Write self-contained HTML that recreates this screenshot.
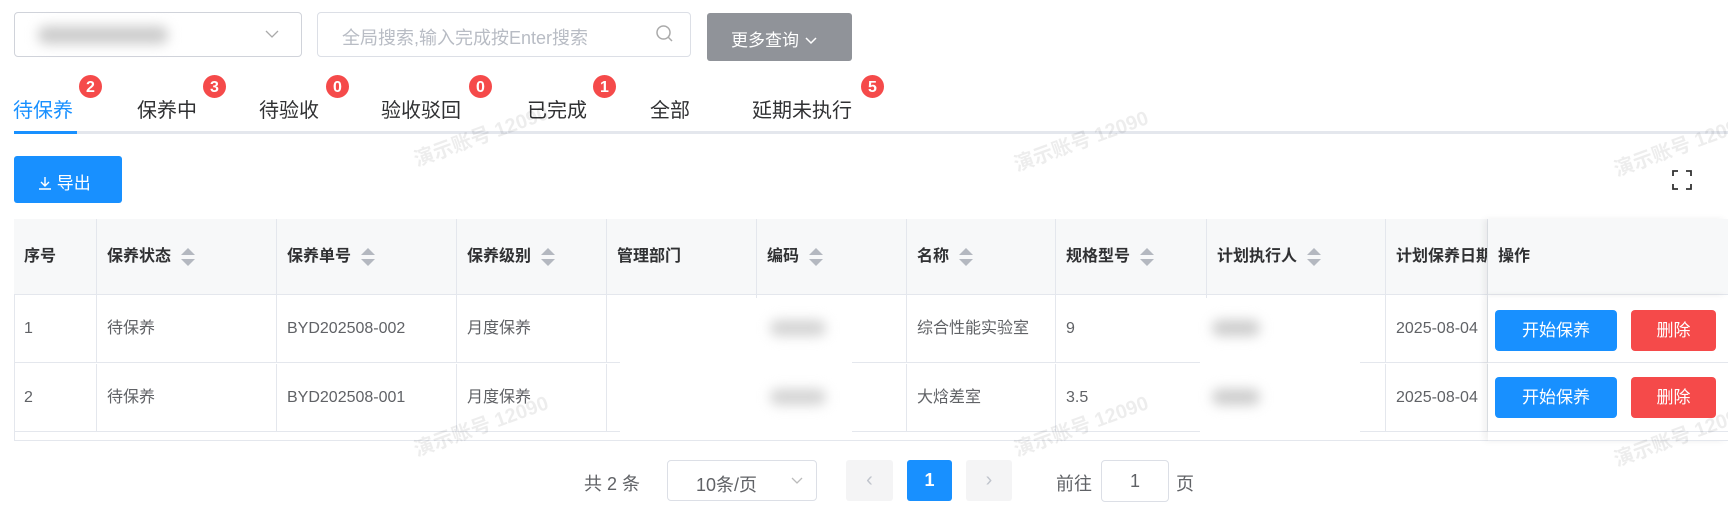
<!DOCTYPE html><html><head><meta charset="utf-8"><style>
*{box-sizing:border-box;margin:0;padding:0}
body{width:1728px;height:507px;overflow:hidden;background:#fff;font-family:"Liberation Sans","Noto Sans CJK SC",sans-serif;color:#303133;position:relative}
.a{position:absolute}
.blur{background:#bbb;filter:blur(6px);border-radius:8px}
.badge{position:absolute;width:25px;height:25px;border-radius:13px;background:#f54a4a;color:#fff;font-size:16px;font-weight:bold;text-align:center;line-height:25px;border:1px solid #fff}
.tab{position:absolute;top:94px;font-size:20px;color:#303133}
.th,.td{position:absolute;font-size:16px;display:flex;align-items:center;padding-left:10px;border-right:1px solid #e4e7ed;border-bottom:1px solid #e4e7ed;line-height:20px}
.th{font-weight:bold;background:#f7f8f9;color:#303133;height:76px;top:219px}
.td{color:#606266;height:68px}
.sort{display:inline-block;margin-left:10px;width:12px;height:18px;position:relative}
.sort:before,.sort:after{content:"";position:absolute;left:0;border-left:7px solid transparent;border-right:7px solid transparent}
.sort:before{top:0;border-bottom:7px solid #b4b8c0}
.sort:after{bottom:0;border-top:7px solid #b4b8c0}
.btn{position:absolute;color:#fff;font-size:17px;text-align:center;border-radius:4px}
.wm{position:absolute;color:rgba(0,0,0,0.07);font-size:20px;font-weight:bold;transform:rotate(-20deg);white-space:nowrap}
</style></head><body>
<div class="a" style="left:14px;top:12px;width:288px;height:45px;border:1px solid #d0d3da;border-radius:4px"></div>
<div class="a blur" style="left:38px;top:26px;width:130px;height:18px;background:#ccc"></div>
<svg class="a" style="left:264px;top:28px" width="16" height="12"><path d="M2 3l6 6 6-6" fill="none" stroke="#aaa" stroke-width="1.3"/></svg>
<div class="a" style="left:317px;top:12px;width:374px;height:45px;border:1px solid #dcdfe6;border-radius:4px;font-size:18px;color:#b8bcc4;padding:11px 0 0 24px">全局搜索,输入完成按Enter搜索</div>
<svg class="a" style="left:655px;top:24px" width="20" height="20"><circle cx="8.5" cy="8.5" r="6.5" fill="none" stroke="#aaa" stroke-width="1.5"/><path d="M13 13l4 4" stroke="#aaa" stroke-width="1.5"/></svg>
<div class="a" style="left:707px;top:13px;width:145px;height:48px;background:#909399;border-radius:3px;color:#fff;font-size:17px;padding:13px 0 0 24px">更多查询 <svg width="14" height="10"><path d="M2 2l5 5 5-5" fill="none" stroke="#fff" stroke-width="1.5"/></svg></div>
<div class="tab" style="left:13px;color:#1890ff">待保养</div>
<div class="tab" style="left:137px">保养中</div>
<div class="tab" style="left:259px">待验收</div>
<div class="tab" style="left:381px">验收驳回</div>
<div class="tab" style="left:527px">已完成</div>
<div class="tab" style="left:650px">全部</div>
<div class="tab" style="left:752px">延期未执行</div>
<div class="badge" style="left:78px;top:74px">2</div>
<div class="badge" style="left:202px;top:74px">3</div>
<div class="badge" style="left:325px;top:74px">0</div>
<div class="badge" style="left:468px;top:74px">0</div>
<div class="badge" style="left:592px;top:74px">1</div>
<div class="badge" style="left:860px;top:74px">5</div>
<div class="a" style="left:14px;top:131px;width:1714px;height:3px;background:#e4e7ed"></div>
<div class="a" style="left:14px;top:131px;width:63px;height:3px;background:#1890ff"></div>
<div class="a" style="left:14px;top:156px;width:108px;height:47px;background:#1890ff;border-radius:3px;color:#fff;font-size:17px;padding:13px 0 0 24px"><svg width="14" height="14" style="vertical-align:-1px"><path d="M7 1v9M3 6l4 4 4-4M1 13h12" fill="none" stroke="#fff" stroke-width="1.4"/></svg> 导出</div>
<svg class="a" style="left:1672px;top:170px" width="20" height="20" fill="none" stroke="#333" stroke-width="1.8"><path d="M1 6V1h5M14 1h5v5M19 14v5h-5M6 19H1v-5"/></svg>
<div class="a" style="left:14px;top:219px;width:1714px;height:222px;border-left:1px solid #e4e7ed;border-top:1px solid #e4e7ed;border-bottom:1px solid #e4e7ed"></div>
<div class="th" style="left:14px;width:83px">序号</div>
<div class="th" style="left:97px;width:180px">保养状态<i class="sort"></i></div>
<div class="th" style="left:277px;width:180px">保养单号<i class="sort"></i></div>
<div class="th" style="left:457px;width:150px">保养级别<i class="sort"></i></div>
<div class="th" style="left:607px;width:150px">管理部门</div>
<div class="th" style="left:757px;width:150px">编码<i class="sort"></i></div>
<div class="th" style="left:907px;width:149px">名称<i class="sort"></i></div>
<div class="th" style="left:1056px;width:151px">规格型号<i class="sort"></i></div>
<div class="th" style="left:1207px;width:179px">计划执行人<i class="sort"></i></div>
<div class="th" style="left:1386px;width:102px;white-space:nowrap;overflow:hidden">计划保养日期</div>
<div class="th" style="left:1488px;width:240px;border-right:none;box-shadow:-4px 0 6px rgba(0,0,0,0.06)">操作</div>
<div class="td" style="left:14px;top:295px;width:83px">1</div>
<div class="td" style="left:97px;top:295px;width:180px">待保养</div>
<div class="td" style="left:277px;top:295px;width:180px">BYD202508-002</div>
<div class="td" style="left:457px;top:295px;width:150px">月度保养</div>
<div class="td" style="left:607px;top:295px;width:150px"></div>
<div class="td" style="left:757px;top:295px;width:150px"></div>
<div class="td" style="left:907px;top:295px;width:149px">综合性能实验室</div>
<div class="td" style="left:1056px;top:295px;width:151px">9</div>
<div class="td" style="left:1207px;top:295px;width:179px"></div>
<div class="td" style="left:1386px;top:295px;width:102px">2025-08-04</div>
<div class="td" style="left:1488px;top:295px;width:240px;border-right:none"></div>
<div class="td" style="left:14px;top:364px;width:83px">2</div>
<div class="td" style="left:97px;top:364px;width:180px">待保养</div>
<div class="td" style="left:277px;top:364px;width:180px">BYD202508-001</div>
<div class="td" style="left:457px;top:364px;width:150px">月度保养</div>
<div class="td" style="left:607px;top:364px;width:150px"></div>
<div class="td" style="left:757px;top:364px;width:150px"></div>
<div class="td" style="left:907px;top:364px;width:149px">大焓差室</div>
<div class="td" style="left:1056px;top:364px;width:151px">3.5</div>
<div class="td" style="left:1207px;top:364px;width:179px"></div>
<div class="td" style="left:1386px;top:364px;width:102px">2025-08-04</div>
<div class="td" style="left:1488px;top:364px;width:240px;border-right:none"></div>
<div class="a" style="left:1488px;top:295px;width:240px;height:146px;box-shadow:-4px 0 6px rgba(0,0,0,0.06)"></div>
<div class="a" style="left:620px;top:298px;width:232px;height:134px;background:#fff"></div>
<div class="a" style="left:1200px;top:298px;width:160px;height:134px;background:#fff"></div>
<div class="a blur" style="left:770px;top:320px;width:56px;height:16px;background:#d3d3d3"></div>
<div class="a blur" style="left:770px;top:389px;width:56px;height:16px;background:#d3d3d3"></div>
<div class="a blur" style="left:1212px;top:320px;width:48px;height:16px;background:#ccc"></div>
<div class="a blur" style="left:1212px;top:389px;width:48px;height:16px;background:#ccc"></div>
<div class="btn" style="left:1495px;top:310px;width:122px;height:41px;line-height:41px;background:#1890ff">开始保养</div>
<div class="btn" style="left:1631px;top:310px;width:85px;height:41px;line-height:41px;background:#f54a4a">删除</div>
<div class="btn" style="left:1495px;top:377px;width:122px;height:41px;line-height:41px;background:#1890ff">开始保养</div>
<div class="btn" style="left:1631px;top:377px;width:85px;height:41px;line-height:41px;background:#f54a4a">删除</div>
<div class="a" style="left:584px;top:470px;font-size:18px;color:#606266">共 2 条</div>
<div class="a" style="left:667px;top:460px;width:150px;height:41px;border:1px solid #dcdfe6;border-radius:4px;font-size:18px;color:#606266;padding:10px 0 0 28px">10条/页</div>
<svg class="a" style="left:790px;top:476px" width="14" height="10"><path d="M2 2l5 5 5-5" fill="none" stroke="#bbb" stroke-width="1.3"/></svg>
<div class="a" style="left:846px;top:460px;width:47px;height:41px;background:#f4f4f5;border-radius:3px;color:#c0c4cc;text-align:center;line-height:41px;font-size:20px">‹</div>
<div class="a" style="left:907px;top:460px;width:45px;height:41px;background:#1890ff;border-radius:3px;color:#fff;text-align:center;line-height:41px;font-size:18px;font-weight:bold">1</div>
<div class="a" style="left:966px;top:460px;width:46px;height:41px;background:#f4f4f5;border-radius:3px;color:#c0c4cc;text-align:center;line-height:41px;font-size:20px">›</div>
<div class="a" style="left:1056px;top:470px;font-size:18px;color:#606266">前往</div>
<div class="a" style="left:1101px;top:460px;width:68px;height:42px;border:1px solid #dcdfe6;border-radius:4px;font-size:18px;text-align:center;line-height:40px;color:#606266">1</div>
<div class="a" style="left:1176px;top:470px;font-size:18px;color:#606266">页</div>
<div class="wm" style="left:410px;top:120px">演示账号 12090</div>
<div class="wm" style="left:1010px;top:125px">演示账号 12090</div>
<div class="wm" style="left:1610px;top:130px">演示账号 12090</div>
<div class="wm" style="left:410px;top:410px">演示账号 12090</div>
<div class="wm" style="left:1010px;top:410px">演示账号 12090</div>
<div class="wm" style="left:1610px;top:420px">演示账号 12090</div>
</body></html>
